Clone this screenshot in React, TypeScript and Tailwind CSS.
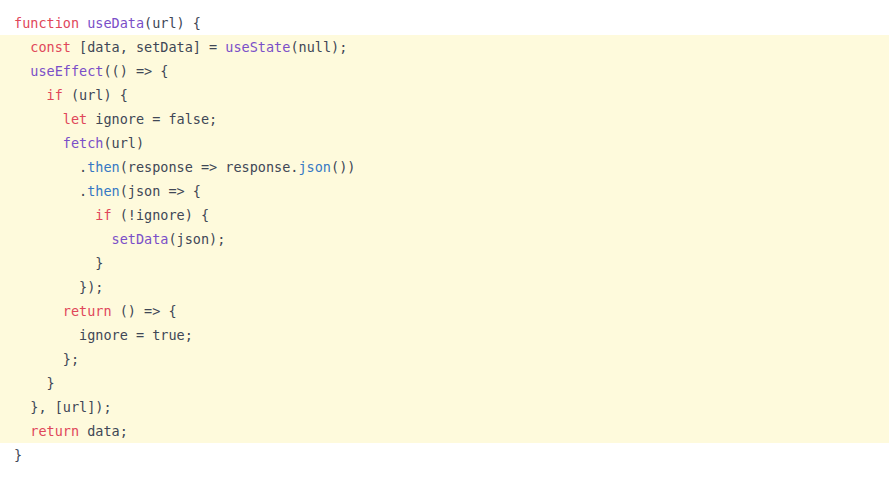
import React from "react";

type Tok = [string, string?];

const K = "text-[#e0475a]";
const F = "text-[#7a4fc8]";
const B = "text-[#3578c4]";

const lines: { toks: Tok[]; hl: boolean }[] = [
  { hl: false, toks: [["function", K], [" "], ["useData", F], ["(url) {"]] },
  { hl: true, toks: [["  "], ["const", K], [" [data, setData] = "], ["useState", F], ["(null);"]] },
  { hl: true, toks: [["  "], ["useEffect", F], ["(() => {"]] },
  { hl: true, toks: [["    "], ["if", K], [" (url) {"]] },
  { hl: true, toks: [["      "], ["let", K], [" ignore = false;"]] },
  { hl: true, toks: [["      "], ["fetch", F], ["(url)"]] },
  { hl: true, toks: [["        ."], ["then", B], ["(response => response."], ["json", B], ["())"]] },
  { hl: true, toks: [["        ."], ["then", B], ["(json => {"]] },
  { hl: true, toks: [["          "], ["if", K], [" (!ignore) {"]] },
  { hl: true, toks: [["            "], ["setData", F], ["(json);"]] },
  { hl: true, toks: [["          }"]] },
  { hl: true, toks: [["        });"]] },
  { hl: true, toks: [["      "], ["return", K], [" () => {"]] },
  { hl: true, toks: [["        ignore = true;"]] },
  { hl: true, toks: [["      };"]] },
  { hl: true, toks: [["    }"]] },
  { hl: true, toks: [["  }, [url]);"]] },
  { hl: true, toks: [["  "], ["return", K], [" data;"]] },
  { hl: false, toks: [["}"]] },
];

export default function App() {
  return (
    <div className="w-[889px] h-[482px] bg-white overflow-hidden pt-[11px]">
      <pre
        className="m-0 text-[13.5px] leading-[24px] text-[#404756]"
        style={{ fontFamily: '"DejaVu Sans Mono", "Liberation Mono", monospace' }}
      >
        {lines.map((l, i) => (
          <div key={i} className={`h-[24px] pl-[14px] whitespace-pre ${l.hl ? "bg-[#fefadc]" : ""}`}>
            {l.toks.map((t, j) =>
              t[1] ? (
                <span key={j} className={t[1]}>
                  {t[0]}
                </span>
              ) : (
                <span key={j}>{t[0]}</span>
              )
            )}
          </div>
        ))}
      </pre>
    </div>
  );
}
